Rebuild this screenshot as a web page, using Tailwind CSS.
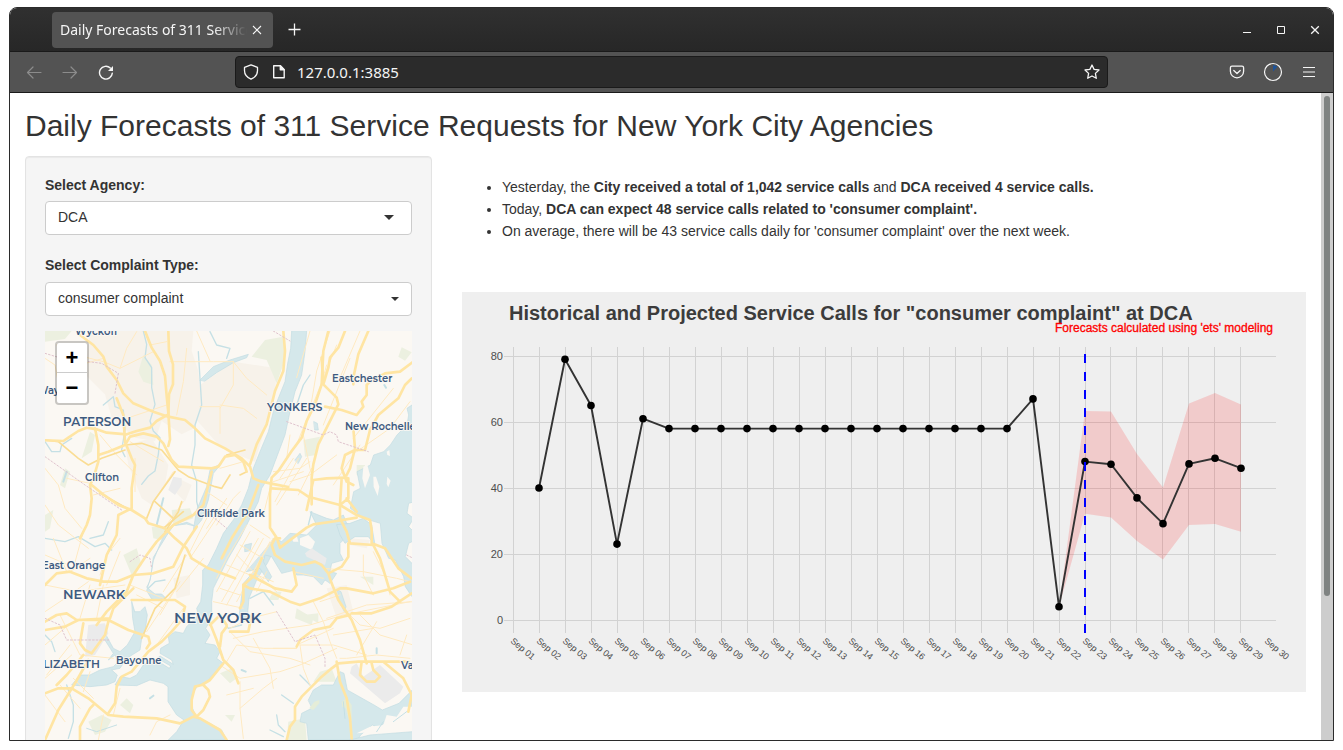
<!DOCTYPE html>
<html lang="en">
<head>
<meta charset="utf-8">
<title>Daily Forecasts of 311 Service Requests for New York City Agencies</title>
<script src="https://cdn.jsdelivr.net/npm/@tailwindcss/browser@4"></script>
</head>
<body class="bg-white">
<div class="flex h-screen flex-col px-[9px] pt-[7px] pb-[9px]">
<div class="flex min-h-0 flex-1 flex-col overflow-hidden rounded-t-lg border border-[#2b2b2b] bg-white">

  <!-- Tab strip -->
  <header class="flex h-11 shrink-0 items-center border-b border-[#1a1a1a] bg-linear-to-b from-[#303030] to-[#272727] pr-[11px] pl-[42px] font-['Noto_Sans',sans-serif] text-[#f5f5f5]">
    <div class="flex h-9 w-[221px] items-center rounded bg-[#535353] pl-2">
      <button class="flex-1 overflow-hidden text-left text-sm whitespace-nowrap [mask-image:linear-gradient(to_right,black_82%,transparent)]">Daily Forecasts of 311 Service</button>
      <button aria-label="Close tab" class="mr-2.5 ml-1"><svg width="12" height="12" viewBox="0 0 12 12" fill="none" stroke="currentColor" stroke-width="1.1"><path d="M2 2l8 8M10 2l-8 8"/></svg></button>
    </div>
    <button aria-label="New tab" class="ml-[15px]"><svg width="13" height="13" viewBox="0 0 13 13" fill="none" stroke="currentColor" stroke-width="1.3"><path d="M6.5 .5v12M.5 6.500h12"/></svg></button>
    <div class="ml-auto flex items-center gap-5">
      <button aria-label="Minimize"><svg width="14" height="14" viewBox="0 0 14 14" fill="none" stroke="currentColor" stroke-width="1"><path d="M3 9.500h8"/></svg></button>
      <button aria-label="Maximize"><svg width="14" height="14" viewBox="0 0 14 14" fill="none" stroke="currentColor" stroke-width="1"><path d="M3.500 3.500h7v7h-7z"/></svg></button>
      <button aria-label="Close"><svg width="14" height="14" viewBox="0 0 14 14" fill="none" stroke="currentColor" stroke-width="1.3"><path d="M3.200 3.200l7.600 7.600M10.800 3.200l-7.600 7.600"/></svg></button>
    </div>
  </header>

  <!-- Navigation bar -->
  <nav class="flex h-[41px] shrink-0 items-center border-b border-[#1a1a1a] bg-[#535353] pr-[16px] pl-4 font-['Noto_Sans',sans-serif] text-[#f5f5f5]">
    <div class="flex gap-5 text-[#8c8c8c]">
      <button aria-label="Back"><svg width="16" height="16" viewBox="0 0 16 16" fill="none" stroke="currentColor" stroke-width="1.2" stroke-linecap="round" stroke-linejoin="round"><path d="M15 8.500H1.500M7 3L1.500 8.500 7 14"/></svg></button>
      <button aria-label="Forward"><svg width="16" height="16" viewBox="0 0 16 16" fill="none" stroke="currentColor" stroke-width="1.2" stroke-linecap="round" stroke-linejoin="round"><path d="M1 8.500h13.500M9 3L14.500 8.500 9 14"/></svg></button>
      <button aria-label="Reload" class="text-[#f5f5f5]"><svg width="16" height="16" viewBox="0 0 16 16" fill="none" stroke="currentColor" stroke-width="1.4" stroke-linecap="round"><path d="M14.300 9.100A6.400 6.400 0 1 1 12.300 4"/><path d="M15 2v5h-5z" fill="currentColor" stroke="none"/></svg></button>
    </div>
    <div class="ml-[121px] flex h-8 w-[873px] items-center rounded border border-[#1a1a1a] bg-[#2b2b2b] px-[7px]">
      <svg class="shrink-0" width="16" height="16" viewBox="0 0 16 16" fill="none" stroke="currentColor" stroke-width="1.3" stroke-linejoin="round"><path d="M8 .8l6.500 2.600v3.300c0 3.900-2.700 6.700-6.500 8.500-3.800-1.800-6.500-4.600-6.500-8.500V3.400z"/></svg>
      <svg class="ml-3 shrink-0" width="16" height="16" viewBox="0 0 16 16" fill="none" stroke="currentColor" stroke-width="1.400" stroke-linejoin="round"><path d="M2.700 1.700h6.600l3.900 4v8.100H2.700z"/><path d="M9.300 1.700v4h3.900z" fill="currentColor"/></svg>
      <input aria-label="Address" value="127.0.0.1:3885" class="ml-[10px] min-w-0 flex-1 bg-transparent text-[15px] outline-none">
      <button aria-label="Bookmark"><svg width="16" height="16" viewBox="0 0 16 16" fill="none" stroke="currentColor" stroke-width="1.300" stroke-linejoin="round"><path d="M8 1l2.100 4.400 4.900.6-3.600 3.400.9 4.900L8 12l-4.300 2.300.9-4.900L1 6l4.900-.6z"/></svg></button>
    </div>
    <div class="ml-auto flex items-center gap-[18px]">
      <button aria-label="Pocket"><svg width="16" height="16" viewBox="0 0 16 16" fill="none" stroke="currentColor" stroke-width="1.300" stroke-linejoin="round" stroke-linecap="round"><path d="M3 2.200h10a1.600 1.600 0 0 1 1.600 1.600v3.400a6.600 6.600 0 0 1-13.200 0V3.800A1.600 1.600 0 0 1 3 2.200z"/><path d="M4.800 6.500L8 9.500l3.200-3"/></svg></button>
      <button aria-label="Sync status"><svg width="20" height="20" viewBox="0 0 20 20"><path d="M10 3l4.500 1.500L10 9.500z" fill="#1c539b"/><circle cx="10" cy="10" r="8.500" fill="none" stroke="currentColor" stroke-width="1.200"/></svg></button>
      <button aria-label="Menu"><svg width="16" height="16" viewBox="0 0 16 16" stroke="currentColor" stroke-width="1.200"><path d="M2 3.500h12M2 8h12M2 12.500h12"/></svg></button>
    </div>
  </nav>

  <div class="flex min-h-0 flex-1">
    <main class="min-w-0 flex-1 overflow-hidden px-[15px] font-['Liberation_Sans',Arial,sans-serif] text-sm text-[#333]">
      <h1 class="mt-4 mb-3.5 text-[30px] leading-[33px]">Daily Forecasts of 311 Service Requests for New York City Agencies</h1>
      <div class="-mx-[15px] flex items-start">

        <div class="w-1/3 px-[15px]">
          <form class="flex flex-col rounded border border-[#e3e3e3] bg-[#f5f5f5] p-[19px] shadow-[inset_0_1px_1px_rgba(0,0,0,0.05)]">
            <label for="agency" class="mb-[7px] leading-[18px] font-bold">Select Agency:</label>
            <div class="relative mb-5">
              <select id="agency" class="block h-[34px] w-full appearance-none rounded border border-[#ccc] bg-white px-3 pb-[3px]"><option>DCA</option></select>
              <svg class="pointer-events-none absolute top-[14px] right-[18px]" width="10" height="5" viewBox="0 0 10 5"><path d="M0 0h10L5 5z" fill="#333"/></svg>
            </div>
            <label for="complaint" class="mb-[7px] leading-5 font-bold">Select Complaint Type:</label>
            <div class="relative mb-[15px]">
              <select id="complaint" class="block h-[34px] w-full appearance-none rounded border border-[#ccc] bg-white px-3 pb-[3px]"><option>consumer complaint</option></select>
              <svg class="pointer-events-none absolute top-[15px] right-[13px]" width="8" height="4" viewBox="0 0 8 4"><path d="M0 0h8L4 4z" fill="#333"/></svg>
            </div>
            <div class="relative overflow-hidden">
              <svg class="block h-auto w-full" viewBox="0 0 367 430" role="img" aria-label="Map of New York City">
                <rect width="367" height="430" fill="#fbf8f3"/>
                <g transform="translate(-5 -6) scale(.33333)" fill="none" stroke-linejoin="round" stroke-linecap="round">
                  <!-- built-up areas -->
                  <g fill="#f7f2ea">
                    <path d="M150 18H460l-5 60 20 60 10 110-20 60-40 20-60-40-20 60-60-10-70-60-20-70-60-60z"/>
                    <path d="M255 360l80-20 50 80-10 60-40 60-30-20-40-100zM480 180l100-70 130 20-5 80-60 200-100-40-80-90zM400 760l50-10v60l-40 10zM860 790l60-10 20 80-50 20zM415 460l40 20-20 50-30-30zM930 640l60 5-10 25-50-10z"/>
                  </g>
                  <!-- parks -->
                  <g fill="#ecf0e0">
                    <path d="M15 18h80l-20 24-60 8zM310 90l25 30 5 60-30-10-15-30zM150 320l15 10-10 50-30 20zM75 430l15 10-15 50-15-10zM15 570l25-15-10 55-15 10zM335 605l50 0-20 40-25-5zM395 555l55-5 10 30-60 20zM675 45l55-10 5 70-25 70-30-70-45-10zM790 345l50-10-10 55-35 5zM1075 95l10-28 30 15-20 25zM250 690l40-20 15 50-30 30zM145 1190l40-20 30 15-20 35-30 10zM240 1140l20-20 20 20-10 25zM770 850l50 30-5 20-50-20zM790 870l45-5 0 30zM820 1070l20-30 35-10 15 40-50 0zM745 1190l50-10 5 65h-60zM540 1045l35-15 15 30-20 15zM700 800l25 0-10 25-30 0zM960 755h40v25zM865 1210l40-10 0 20zM950 420l25 0-5 40-20-10zM975 765l20-10 5 20zM555 1170l30 0-10 20zM1050 1060z"/>
                  </g>
                  <!-- rivers, bays and the Sound -->
                  <g fill="#d5e8eb" stroke="#c3dde2" stroke-width="2">
                    <path d="M755 18L752 70 743 115 735 170 715 220 700 260 685 320 660 380 640 430 625 490 605 540 580 585 550 625 530 670 505 720 488 735 488 780 482 830 470 850 475 870 440 905 430 925 405 920 385 935 388 955 362 970 360 985 395 1005 400 1018 360 993 352 1000 392 1023 388 1030 340 1000 330 1012 310 1020 290 1050 270 1060 240 1055 225 1080 290 1082 330 1065 370 1075 384 1085 384 1130 410 1170 432 1185 410 1220 385 1245 560 1245 545 1215 500 1190 470 1180 458 1150 455 1110 475 1080 500 1070 535 1030 550 1015 530 1000 540 980 525 960 495 955 510 930 497 910 515 880 515 830 520 790 540 750 565 700 600 640 635 570 655 530 665 490 690 450 705 410 735 330 750 260 765 200 785 150 795 80 800 18z"/>
                    <path d="M275 830L278 880 285 920 262 960 240 980 220 970 190 915 182 925 220 985 205 1005 225 990 235 1010 220 1025 180 1035 150 1050 120 1050 95 1080 150 1085 200 1080 225 1070 232 1050 215 1035 240 1030 260 1000 300 975 305 940 315 920 322 870 315 845 300 860 285 860z"/>
                    <path d="M700 640l-35 60-15 30-40 45-8 60-5 40 15 15 10-15 5-55 25-60 30-45 20-40 10-15z"/>
                    <path d="M705 640l20 10 25-25 50 5 30-30-20-40 50 20 20 5 30-15 10 25 20 10-10 20-30 30 0 30 10 20-35 10-5 25 20 5-20 30-15-10-10 15-25-25-30-5-20 0-5-15-40 10-30-50-20-5-5 20 25 45-10 15-25-40-40 10z"/>
                    <path d="M890 600l10 30 15 25 30-20 40 0 20 25-10-60-25-20-40 15z"/>
                    <path d="M1116 240l-15 10 5 20-5 30-30 30-20 30-20 20-30 10-10 30-40 20 10 50-20 10-10 50 40 30 50 15 5 60 20 45 20 5 25 50 5 30 20 30 10-10v-80l-30-30 10-40 20-10 0-20-20-20 15-25-20-15 5-30 35-10z"/>
                    <path d="M805 1125l15-30 25-15 35 0 20-40 12 5 10 50 80 45 25 15 50-20 40-40v60l-50 30-20-5-30 30-20-10-35 30-10 15-147 0-5-50-20-5 5-25 30-15z"/>
                    <path d="M930 1245l60-15 128-10v27H930zM480 165l40-40 50-20 55-17-5 10-40 15-50 30-35 25z"/>
                    <path d="M470 605l-30-8-40 5-25 25-15 30-20 50-10 60-10 20 25 20 20 0 10 10-20 10-20-5-15-25 12-40 8-60 40-65 20-30 40-10z"/>
                    <path d="M545 415l-25 30-15 80-20 60-25 30 10-60 30-70 10-50z"/>
                    <path d="M893 795l10 5 15 45-5 15-15-30zM615 660l20-5-5 22-15 3zM822 290l10 5 3 20-10 0zM765 405l15-20 5 10-10 20z"/>
                  </g>
                  <!-- islands and peninsulas -->
                  <g fill="#fbf8f3">
                    <path d="M1000 455l8 0 10 30-5 28-12-28zM1042 455l10 12-7 20-5-10zM970 425l12-5 8 30-15 40-8-30zM780 640l25-10 20 20-10 25-35-15zM1040 380l8-5 2 18-8-3zM755 640l15-10 5 20-15 0zM950 1225l40-20 40-5 10-30 30 5 20-30 26 0v30l-40 35-60 10z"/>
                  </g>
                  <g fill="#e5edd8"><path d="M808 1150l15-20 15-5 0 10-18 20zM905 1130l15-10 15 20 0 50-10-10-8-30-10-5z"/></g>
                  <!-- airports -->
                  <g fill="#ebebeb"><path d="M145 900l50-5 10 30-40 65-30 5 5-50zM400 455l25 5 0 20-20 30-20-15zM795 685l20-15 45 30-5 20-55-25zM935 1025l15-10 20 40 50-35 70 65-10 20-45 30-35-30-70-60z"/></g>
                  <!-- creeks -->
                  <g stroke="#c5e0e5" stroke-width="4">
                    <path d="M310 18l10 40-5 40 20 30 0 60 10 50-15 50 10 30 20 20-5 50-10 50-20 15-20 25M475 80l10 160-20 60 0 60-10 60 15 50 0 60 10 40M15 350l20 30 25 0 5-20 30-20M190 240l30-25 5 30 25 10 5 60-10 60 10 20M150 640l40-10 15-40M15 640l60 10 40-15 50 30 30-10 20 20M80 1080l20 60 0 50-15 50M15 930l20 20 10 30M510 20l20 40 40 10-10 30M770 240l20-60 20-30M815 560l-10 40M780 1050l30 30M725 1110l35 25M690 1215l40 20M710 1170l5 30 20 20M630 820l40-20 30 40M545 880l20 30 40-10M325 790l20-20 30-5"/>
                    <path d="M1033 180l5 8M330 1120l10-8M1010 970v15M605 1035l12 5M80 440l-10 30M350 600l20-80" stroke-width="6"/>
                    <path d="M140 1210l30 10 60-20M1010 1220l20-30M1060 1190l40-30M910 1130l5 50" stroke-width="3"/>
                  </g>
                  <!-- local roads -->
                  <g stroke="#ffeac2" stroke-width="3">
                    <path d="M50 60l60 30 80 20 50 20 60-30 40-20M240 130l20-60 30-50M330 60l50-10M390 110l130 0 60 0M470 18l40 90M410 270l20-100 10-100M480 245l60 0 0 80M540 240l70 10 40 30M580 110l0 70-40 70M580 110l40 50 60 50M260 280l120-40M190 100l-70 20-60-20M270 350l100 60M180 330l50 60 60 60M15 100l30 20 15 80M15 430l40 50 20 70 50 60M15 540l40 60 90 70M80 460l70 15M15 690l70 30M160 510l80-20M285 400l0 100M400 440l-60 90M430 530l-50 70M345 530l60 60M500 500l60 40M510 560l-60 120M530 580l-80 120M560 520l-60 90M600 500l-20 20-50 80M610 410l-70 20"/>
                    <path d="M15 780l100 20 140-20M40 640l40 100M200 780l40-100M180 750l20-60 40-50M130 620l-30 110M150 700l-60 40M190 780l-20 100M270 780l100 40M290 810l80 40M400 800l-80 120M420 770l-60 100M440 690l-70 110M490 700l-80 100M15 860l60-40 70-50M15 960l70-60M150 780l-30 100M430 850l-80 110M60 870l60 120 100 10M90 960l-70 90M60 1080l60 70M15 1060l80-70M100 1060l60 60M15 1110l60 80M150 1040l-20 60M240 1090l-20 80M330 1230l20-40 40-20M190 1170l-15 75"/>
                    <path d="M870 18l-40 120-20 120-40 100M890 60l-80 200M930 100l-80 200M960 18l-60 140M810 18l-40 140M860 120l-40 140M1110 230l-60 80-100 70M1060 190l-80 100-40 50M750 330l-10 70M760 400l-40 60M775 400l-70 130M800 400l-90 140M815 430l-40 80M700 440l80-10 30-20M690 490l-20 80M700 470l90-30M790 330l20 100 10 40M960 360l-80 120M890 390l-80 60-60 20"/>
                    <path d="M620 600l-60 100-30 60M630 620l-100 180M655 640l-110 190M670 640l-110 200M690 650l-100 180M700 640l-90 150M630 600l60 40M600 660l70 40M560 720l70 30M540 790l60 20M520 830l90 20M590 690l60 60"/>
                    <path d="M570 910l60-30 80-20M580 940l90-20 140-20 100-30 200-40M570 920l60 60 120 20 60 20M560 1010l30-50 80 10 100 0M540 1020l60 40 120-20 60-20 110-50M600 1070l0 80 10 90M600 1150l70-60 40-30M640 940l50 90 10 60M700 970l70 0M560 1110l80-20M780 960l10 70 20 50M780 960l100 0 100 30M820 830l30 60 20 60 20 50M840 830l60-20M900 840l60 60 60 10 90-30M960 870l60 60 100 30M860 880l120-40 140-10M950 990l60-100M770 960l110-50M1000 680l40 80 10 50M970 690l0 60 30 60M850 730l120 10 100 20 40 10M760 740l90 20M700 770l-50-20M650 800l30-60M640 740l70 60M880 930l120-20M900 1000l20 0 90-10 100 10M1100 930l-20 60"/>
                  </g>
                  <!-- toll roads -->
                  <g stroke="#fadd94" stroke-width="5">
                    <path d="M15 345l40 5 60 50 30 20 40-20 70-25M255 360l50-5 60 20 50 60 30 20 80 30 20 5 25-40M405 440l-65 90-20 50M345 530l55 50M270 555l-90-50M430 560l-60 50M435 690l-30 100-60 60-40 90M600 450l20-10"/>
                    <path d="M425 530l-10 30-40 60M560 390l55-15"/>
                  </g>
                  <!-- motorways -->
                  <g stroke="#ffe5a3" stroke-width="8">
                    <path d="M120 30l40 30 30 35 10 30 30 40 20 40 30 30 60 25 45 15 50 10 30 25 30 30 60 30 50 30 25 25 10 35 25 10 40 8 40 8"/>
                    <path d="M315 18l20 50 25 40 15 45 5 60 5 50 5 80-5 20"/>
                    <path d="M385 18l2 60 12 40 0 60-12 30-2 60-35 20-20 20-40 10-30 10-60-5-30-10-30-5-25 10-30 20-15 10-70-3"/>
                    <path d="M165 310l10 50 0 50-15 50-10 20 5 40-5 50-10 30-20 40M175 390l30-10 50-20 15-25 40-10 40 10 20 20 25 50 20 20 100 5 20-5 20-30 30-5 25 20 10 30"/>
                    <path d="M230 220l20 50 5 80 20 50 10 20-10 70 0 60-40 20-5 60-30 60-20 90M155 480l30 25 50 35 40 15 40 25 10 15 50 15 30 30 35 30 15 30 50 30 40 15 40 15"/>
                    <path d="M515 440l-10 40-15 60-30 30-60 30-50 50-30 40-40 60-20 50-60 60-30 40"/>
                    <path d="M470 605l-40 60-30 60-60 20-60 5-50 20-40 0-50-10-50-20-40 5-35 35"/>
                    <path d="M730 18l5 60-5 60-25 60-25 100-30 60-20 60M655 480l-30 80-50 80-30 60"/>
                    <path d="M865 18l-15 60-5 100-20 60-25 50-15 50-30 40-40 60-20 20-5 50 0 100 20 30 10 30 80-60 20-10 70-10 60-10"/>
                    <path d="M915 18l-20 50-25 30-5 30-15 50 40 40 5 20-30 60-30 60-15 60-5 40 0 80M850 178l-5-80M855 245l50 10 45 15 20-25-5-15 15-20 0-30 10-10 45-25 45-5 40-30M985 18l-30 70-15 70 0 20"/>
                    <path d="M1115 160l-20 20-20 40-60 50-25 45-15 60-30 0-30 15-10 40 15 40 20 10M940 310l5 60-15 60-10 20M695 490l80 5 30 20 95 25 50 30 40 15 5 30 0 40 40 15 40 60 40 30"/>
                    <path d="M800 555l20-90 40-5 60-2M905 460l-5 80 0 40 20 40 10 35 70 5M920 520l30 40M925 460l0 60-25 20"/>
                    <path d="M720 640l-15 0-10 20 10 30 30 20 50 10 40-10 20 10 20 25 40-20 20-30 0-40M760 730l10 50-15 20-50-10-75-40M865 745l10 30 20 50 20 30 20 30 25 60 20 70"/>
                    <path d="M610 780l20 10 60 10 60 30 30 10 60-20 60-30 20 0 80 15 60-15 50-20M935 865l60 0 60-20 60-40M1080 830l-30-30-30-100-20-40"/>
                    <path d="M770 965l10-20 40-30 50-10 20-25 40-10M665 700l-20 50-35 30 0 50-10 20M570 920h55l10-50"/>
                    <path d="M740 1245l10-40 15-20 0-40 20-30 30-30 30-30 30-25 20-15 60-5 150 0M890 1010l10 60 20 50 10 60 5 60M965 1010l-5 40 20 20 25 0 15-15-20-20-5-20M1030 1010l60 50 25 50-10 50"/>
                    <path d="M510 895l20 50 20 60 30 30 15 40M550 1015l-40 50-25 15-20 5-10 40 0 30 15 20 20-20 20-40-5-20-15-15M560 905l-15 20-5 40M510 900l30-30 20 30"/>
                    <path d="M560 1245l-20-30-60-35-20-5-40 20-70-15-100-5-45-5-60-50-50-30-40 0-40 15M205 1165l20-30 5-50 15-30 30-15 50-60 40-30 30-30 30-35 10-40-30-20-50 0-80 0"/>
                    <path d="M280 790l-40 40-20 20-10 30-100 5-30-20-30 5-35 20M15 915l60-10 40-20 90 0 60 30 60 20 5 20-10 15M205 890l-10 40-40 55-20-10-15-20 10-60M15 1245l40-90 50-80 40-70M120 1245l0-40 30-55 10-10M50 1080l30-30 50-60"/>
                  </g>
                  <!-- boundaries -->
                  <g stroke="#dfc3cd" stroke-width="3" stroke-dasharray="5 6">
                    <path d="M15 85l50 15M145 110l40 5 50 30-10 60M15 395l120 85 110 75M15 880l45 20 20 45 130 0M700 18l50 30M740 290l110 40 20-10 20 10 5 20 90 30M710 860l55 90 60-20 30 70 0 30M1100 690l20 10M270 710l30-20 30 10 5 30M500 560l60 50"/>
                  </g>
                </g>
                <g class="font-[Montserrat,Inter,sans-serif]" font-weight="600" fill="#3d5a80" stroke="#fbf8f3" stroke-opacity=".85" stroke-width="2" paint-order="stroke" stroke-linejoin="round">
                  <g font-size="10">
                    <text x="30" y="4">Wyckoff</text><text x="-8" y="63">Wayne</text>
                    <text x="40" y="150">Clifton</text><text x="152" y="186">Cliffside Park</text>
                    <text x="287" y="51">Eastchester</text><text x="300" y="99">New Rochelle</text>
                    <text x="-3" y="238">East Orange</text><text x="71" y="333">Bayonne</text>
                    <text x="356" y="338">Valley Stream</text><text x="270" y="-1">Bronxville</text>
                  </g>
                  <g font-size="11"><text x="222" y="80">YONKERS</text><text x="-2" y="337">LIZABETH</text></g>
                  <text x="18" y="95" font-size="12">PATERSON</text>
                  <text x="18" y="268" font-size="13">NEWARK</text>
                  <text x="129" y="292" font-size="15">NEW YORK</text>
                </g>
              </svg>
              <div class="absolute top-2.5 left-2.5 flex w-[34px] flex-col rounded border-2 border-black/20 bg-white bg-clip-padding text-[22px] font-bold text-black">
                <button type="button" aria-label="Zoom in" class="h-[30px] border-b border-[#ccc] leading-[30px]">+</button>
                <button type="button" aria-label="Zoom out" class="h-[30px] leading-[30px]">−</button>
              </div>
            </div>
          </form>
        </div>

        <div class="w-2/3 px-[15px]">
          <ul class="mt-5 mb-[50px] list-disc pl-10 leading-[22px]">
            <li>Yesterday, the <b>City received a total of 1,042 service calls</b> and <b>DCA received 4 service calls.</b></li>
            <li>Today, <b>DCA can expect 48 service calls related to 'consumer complaint'.</b></li>
            <li>On average, there will be 43 service calls daily for 'consumer complaint' over the next week.</li>
          </ul>
          <svg id="chart" class="block h-auto w-full bg-[#efefef]" viewBox="0 0 844 400" role="img" aria-label="Historical and projected service calls" font-family="Liberation Sans, Arial, sans-serif">
            <g id="grid" stroke="#d2d2d2"></g>
            <path d="M597 315L623 119 649 119.500 675 162 701 195.500 727 111.500 753 101 779 112.500V239.700L753 232 727 233 701 267.500 675 249 649 225.500 623 221.700z" fill="#ff0000" fill-opacity=".15"/>
            <polyline id="line" fill="none" stroke="#333" stroke-width="1.900" stroke-linejoin="round"/>
            <g id="dots"></g>
            <path d="M623 341V60" stroke="#00f" stroke-width="2" stroke-dasharray="9 9"/>
            <g id="ticks" fill="#4d4d4d"></g>
            <text x="47" y="28" font-size="20" font-weight="700" fill="#3c3c3c">Historical and Projected Service Calls for "consumer complaint" at DCA</text>
            <text x="593" y="40" font-size="12" fill="#f00" stroke="#f00" stroke-width=".3">Forecasts calculated using 'ets' modeling</text>
          </svg>
        </div>
      </div>
    </main>
    <div class="w-3 shrink-0 bg-[#cdcdcd] px-[3px] pt-[3px]"><div class="h-[500px] rounded-full bg-[#7f8382]"></div></div>
  </div>
</div>
</div>

<script>
  const NS = 'http://www.w3.org/2000/svg';
  const add = (parent, tag, attrs, text) => {
    const el = document.createElementNS(NS, tag);
    for (const k in attrs) el.setAttribute(k, attrs[k]);
    if (text !== undefined) el.textContent = text;
    document.getElementById(parent).appendChild(el);
  };
  const x = day => 51 + 26 * (day - 1);
  const y = calls => 328 - 3.3 * calls;
  // Calls per day, from September 2 on
  const calls = [40, 79, 65, 23, 61, 58, 58, 58, 58, 58, 58, 58, 58, 58, 58, 58, 58, 58, 58, 67, 4, 48, 47.2, 37, 29.2, 47.3, 49, 46];
  for (const v of [0, 20, 40, 60, 80]) {
    const py = Math.round(y(v)) + 0.5;
    add('grid', 'line', { x1: 42, x2: 814, y1: py, y2: py });
    add('ticks', 'text', { x: 41, y: py + 3.5, 'font-size': 11, 'text-anchor': 'end' }, v);
  }
  // The last label stands one step past the last grid line
  for (let d = 1; d <= 30; d++) {
    const gx = d < 24 ? x(d) + 0.5 : x(d) - 0.5;
    if (d < 30) add('grid', 'line', { x1: gx, x2: gx, y1: 55, y2: 341 });
    add('ticks', 'text', { transform: `translate(${x(d) - 3} 350) rotate(40)`, 'font-size': 9 }, 'Sep ' + String(d).padStart(2, '0'));
  }
  document.getElementById('line').setAttribute('points', calls.map((c, i) => `${x(i + 2)},${y(c)}`).join(' '));
  calls.forEach((c, i) => add('dots', 'circle', { cx: x(i + 2), cy: y(c), r: 3.8 }));
</script>
</body>
</html>
